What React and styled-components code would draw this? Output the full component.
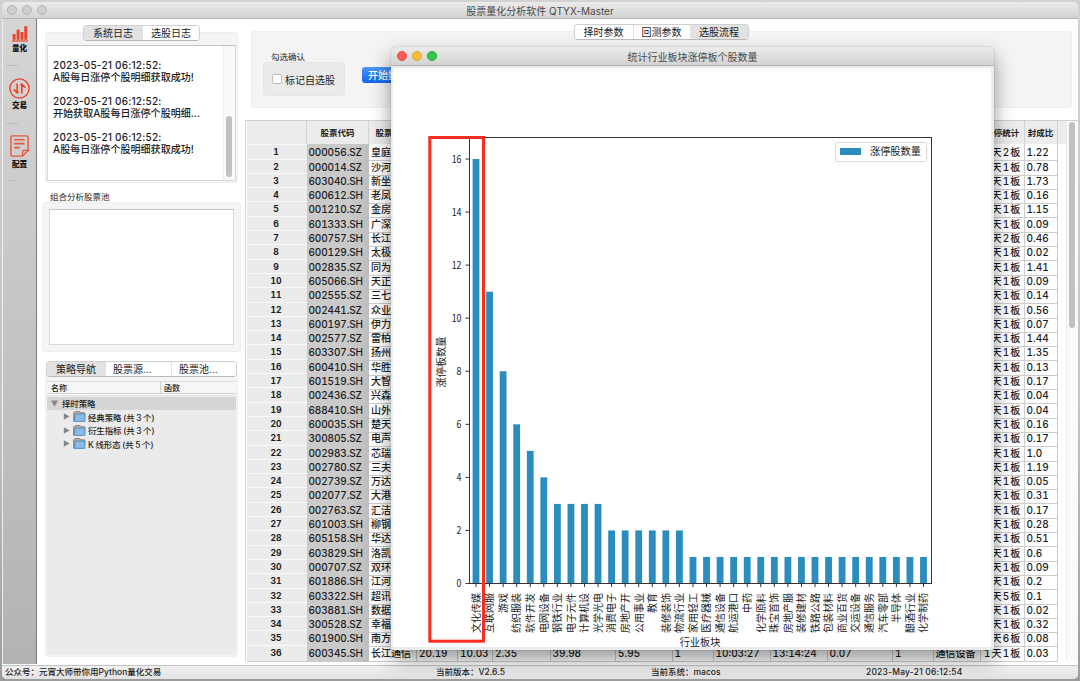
import React from "react";
import styled, { createGlobalStyle, css } from "styled-components";

const Global = createGlobalStyle`
  * { box-sizing: border-box; }
  html, body { margin: 0; padding: 0; overflow: hidden; }
  body {
    font-family: Inter, "Noto Sans CJK SC", sans-serif;
    font-size: 10px;
    color: #1c1c1c;
    white-space: nowrap;
  }
`;

/* ---------- data ---------- */

const STOCKS = [
  ["000056.SZ", "皇庭国际", "1 天 2 板", "1.22"],
  ["000014.SZ", "沙河股份", "1 天 1 板", "0.78"],
  ["603040.SH", "新坐标", "1 天 1 板", "1.73"],
  ["600612.SH", "老凤祥", "1 天 1 板", "0.16"],
  ["001210.SZ", "金房节能", "1 天 1 板", "1.15"],
  ["601333.SH", "广深铁路", "1 天 1 板", "0.09"],
  ["600757.SH", "长江传媒", "1 天 2 板", "0.46"],
  ["600129.SH", "太极集团", "1 天 1 板", "0.02"],
  ["002835.SZ", "同为股份", "1 天 1 板", "1.41"],
  ["605066.SH", "天正电气", "1 天 1 板", "0.09"],
  ["002555.SZ", "三七互娱", "1 天 1 板", "0.14"],
  ["002441.SZ", "众业达", "1 天 1 板", "0.56"],
  ["600197.SH", "伊力特", "1 天 1 板", "0.07"],
  ["002577.SZ", "雷柏科技", "1 天 1 板", "1.44"],
  ["603307.SH", "扬州金泉", "1 天 1 板", "1.35"],
  ["600410.SH", "华胜天成", "1 天 1 板", "0.13"],
  ["601519.SH", "大智慧", "1 天 1 板", "0.17"],
  ["002436.SZ", "兴森科技", "1 天 1 板", "0.04"],
  ["688410.SH", "山外山", "1 天 1 板", "0.04"],
  ["600035.SH", "楚天高速", "1 天 1 板", "0.16"],
  ["300805.SZ", "电声股份", "1 天 1 板", "0.17"],
  ["002983.SZ", "芯瑞达", "1 天 1 板", "1.0"],
  ["002780.SZ", "三夫户外", "1 天 1 板", "1.19"],
  ["002739.SZ", "万达电影", "1 天 1 板", "0.05"],
  ["002077.SZ", "大港股份", "1 天 1 板", "0.31"],
  ["002763.SZ", "汇洁股份", "1 天 1 板", "0.17"],
  ["601003.SH", "柳钢股份", "1 天 1 板", "0.28"],
  ["605158.SH", "华达新材", "1 天 1 板", "0.51"],
  ["603829.SH", "洛凯股份", "1 天 1 板", "0.6"],
  ["000707.SZ", "双环科技", "1 天 1 板", "0.09"],
  ["601886.SH", "江河集团", "1 天 1 板", "0.2"],
  ["603322.SH", "超讯通信", "1 天 5 板", "0.1"],
  ["603881.SH", "数据港", "1 天 1 板", "0.02"],
  ["300528.SZ", "幸福蓝海", "1 天 1 板", "0.32"],
  ["601900.SH", "南方传媒", "1 天 6 板", "0.08"],
  ["600345.SH", "长江通信", "1 天 1 板", "0.03",
    ["20.19", "10.03", "2.35", "39.98", "5.95", "1", "10:03:27", "13:14:24", "0.07", "1", "通信设备"]],
];

const SECTORS = [
  ["文化传媒", 16], ["互联网服", 11], ["游戏", 8], ["纺织服装", 6], ["软件开发", 5],
  ["电网设备", 4], ["钢铁行业", 3], ["电子元件", 3], ["计算机设", 3], ["光学光电", 3],
  ["消费电子", 2], ["房地产开", 2], ["公用事业", 2], ["教育", 2], ["装修装饰", 2],
  ["物流行业", 2], ["家用轻工", 1], ["医疗器械", 1], ["通信设备", 1], ["航运港口", 1],
  ["中药", 1], ["化学原料", 1], ["珠宝首饰", 1], ["房地产服", 1], ["装修建材", 1],
  ["铁路公路", 1], ["包装材料", 1], ["商业百货", 1], ["交运设备", 1], ["通信服务", 1],
  ["汽车零部", 1], ["半导体", 1], ["酿酒行业", 1], ["化学制药", 1],
];

/* ---------- window frame ---------- */

const Desktop = styled.div`
  width: 1080px;
  height: 681px;
  padding: 2px 2px 2px 2px;
  background: linear-gradient(#d2d2d2, #c4c4c4 60%, #9c9c9c);
`;

const MainWindow = styled.div`
  position: relative;
  height: 677px;
  display: flex;
  flex-direction: column;
  background: #fff;
  border-radius: 5px;
  overflow: hidden;
`;

const TitleBar = styled.div`
  position: relative;
  flex: none;
  height: ${(p) => p.$h}px;
  display: flex;
  align-items: center;
  justify-content: center;
  background: linear-gradient(#ebebeb, #d3d3d3);
  border-bottom: 1px solid #b4b4b4;
  color: #4a4a4a;
  font-size: 10px;
`;

const Lights = styled.div`
  position: absolute;
  left: ${(p) => p.$x}px;
  top: 50%;
  transform: translateY(-50%);
  display: flex;
  gap: ${(p) => p.$gap}px;
`;

const Light = styled.span`
  width: 10px;
  height: 10px;
  border-radius: 50%;
  background: ${(p) => p.$c};
  border: 1px solid ${(p) => p.$b};
`;

const Body = styled.div`
  flex: 1;
  min-height: 0;
  display: flex;
`;

const StatusBar = styled.div`
  flex: none;
  height: 14px;
  display: grid;
  grid-template-columns: 431px 215px 215px 1fr;
  align-items: center;
  padding: 0 0 1px 3px;
  background: linear-gradient(#f0f0f0, #e2e2e2);
  border-top: 1px solid #c3c3c3;
  font-size: 8.5px;
  font-weight: 500;
  line-height: 11px;
`;

const Stamp = styled.span`
  letter-spacing: 0.2px;
`;

/* ---------- sidebar ---------- */

const Sidebar = styled.nav`
  width: 35px;
  height: 645px;
  flex: none;
  display: flex;
  flex-direction: column;
  border-left: 1px solid #eee;
  border-right: 1px solid #7c7c7c;
  background: linear-gradient(#d5d5d5, #b3b3b3);
`;

const Tool = styled.div`
  height: 57.5px;
  display: flex;
  flex-direction: column;
  align-items: center;
  font-size: 7.6px;
  font-weight: 800;
  line-height: 10px;
  color: #111;
  padding-top: ${(p) => p.$top}px;
  gap: ${(p) => p.$gap}px;
  svg { display: block; flex: none; }
`;

const ToolRule = styled.div`
  width: 12px;
  height: 1px;
  margin: -11.5px 0 10.5px 3px;
  background: #bcbcbc;
`;

/* ---------- shared panels ---------- */

const Tabs = styled.div`
  position: relative;
  z-index: 1;
  flex: none;
  align-self: ${(p) => (p.$left ? "flex-start" : "center")};
  display: flex;
  height: 16px;
  margin: ${(p) => p.$m || 0};
  border: 1px solid #cfcfcf;
  border-bottom-color: #b9b9b9;
  border-radius: 4px;
  background: #fff;
  overflow: hidden;
`;

const Tab = styled.div`
  width: ${(p) => p.$w}px;
  padding-left: ${(p) => p.$pl || 0}px;
  padding-bottom: 1px;
  display: flex;
  align-items: center;
  justify-content: ${(p) => (p.$pl ? "flex-start" : "center")};
  background: ${(p) => (p.$on ? "#e2e2e2" : "#fff")};
  & + & { border-left: 1px solid #e2e2e2; }
`;

const Panel = styled.section`
  flex: none;
  display: flex;
  flex-direction: column;
  height: ${(p) => p.$h}px;
  margin: ${(p) => p.$m || 0};
  padding: ${(p) => p.$p || 0};
  background: #f4f4f4;
  border: 1px solid #eeeeee;
  border-radius: 3px;
`;

const Caption = styled.div`
  height: 10px;
  line-height: 10px;
  font-size: 8.5px;
  margin: ${(p) => p.$m};
`;

const LeftColumn = styled.aside`
  width: 204px;
  flex: none;
  display: flex;
  flex-direction: column;
`;

const Sunken = styled.div`
  flex: 1;
  display: flex;
  justify-content: space-between;
  background: #fff;
  border: 1px solid #d9d9d9;
  border-top: 1px solid #c4c4c4;
`;

const LogText = styled.div`
  padding: 13px 0 0 5px;
  line-height: 12px;
  white-space: pre;
  font-weight: 500;
  letter-spacing: 0.05px;
`;

const LogTime = styled.span`
  letter-spacing: 0.22px;
`;

const ScrollTrack = styled.div`
  width: 12px;
  flex: none;
  background: #fafafa;
  border-left: 1px solid #ececec;
  padding: ${(p) => p.$top}px 0 0 2px;
`;

const Thumb = styled.div`
  width: 6px;
  height: ${(p) => p.$h}px;
  border-radius: 3px;
  background: #c1c1c1;
`;

/* ---------- tree ---------- */

const TreeHead = styled.div`
  height: 13px;
  flex: none;
  display: flex;
  align-items: center;
  margin-bottom: 1px;
  background: #f6f6f6;
  border-top: 1px solid #dcdcdc;
  border-bottom: 1px solid #d4d4d4;
  font-size: 8px;
  font-weight: 500;
  span { width: 113px; padding-left: 4px; }
  span + span { width: 75px; padding-left: 3px; border-left: 1px solid #cfcfcf; }
`;

const Tree = styled.div`
  flex: 1;
  padding-top: 1.5px;
  background: #ebebeb;
`;

const TreeRow = styled.div`
  height: 13.5px;
  display: flex;
  align-items: center;
  gap: ${(p) => (p.$root ? 5 : 3)}px;
  padding-left: ${(p) => (p.$root ? 4 : 16)}px;
  background: ${(p) => (p.$root ? "#d6d6d6" : "transparent")};
  font-size: 8.4px;
  font-weight: 500;
  word-spacing: -0.6px;
  span { margin-left: -1px; }
`;

/* ---------- right side ---------- */

const RightColumn = styled.main`
  flex: 1;
  min-width: 0;
  display: flex;
  flex-direction: column;
`;

const Options = styled.div`
  display: flex;
  align-items: flex-start;
  gap: 17px;
`;

const Group = styled.div`
  width: 82px;
  height: 34px;
  display: flex;
  align-items: center;
  gap: 3px;
  padding-left: 8px;
  background: #eaeaea;
  border: 1px solid #e5e5e5;
  border-radius: 3px;
`;

const Check = styled.span`
  width: 10px;
  height: 10px;
  background: #fff;
  border: 1px solid #bdbdbd;
  border-radius: 2px;
`;

const BlueButton = styled.button`
  width: 70px;
  height: 16px;
  margin-top: 5px;
  padding: 0 0 1px 6px;
  border: 0;
  border-radius: 3px;
  background: linear-gradient(#4b97fb, #1465ea);
  color: #fff;
  font: inherit;
  font-weight: 500;
  text-align: left;
`;

const TableFrame = styled.div`
  display: flex;
  justify-content: space-between;
  height: 541px;
  margin: 12px 0 0 4px;
  border-left: 1px solid #d5d5d5;
  border-top: 1px solid #cdcdcd;
`;

const cols = css`
  display: grid;
  grid-template-columns: 60px 62px 48px 41px 35px 57.5px 65.5px 56.5px 41px 57px 57px 65.5px 40.5px 47.5px 43.5px 33px;
`;

const TableBody = styled.div`
  width: 820px;
  padding-left: 1px;
`;

const HeadRow = styled.div`
  ${cols}
  width: 819px;
  height: 23.3px;
  background: #ececec;
  font-size: 8.5px;
  font-weight: 700;
`;

const HeadCell = styled.div`
  display: flex;
  align-items: center;
  justify-content: center;
  padding-bottom: 2px;
  border-right: 1px solid #d2d2d2;
  overflow: hidden;
`;

const Row = styled.div`
  ${cols}
  width: 811px;
  height: 14.31px;
  line-height: 17px;
  font-weight: 500;
  font-variant-numeric: tabular-nums;
`;

const Index = styled.div`
  padding-right: 2px;
  text-align: center;
  font-size: 8.6px;
  font-weight: 700;
  background: #ebebeb;
  border-top: 1px solid #fafafa;
  border-bottom: 1px solid #cfcfcf;
  line-height: 15px;
`;

const Code = styled.div`
  padding-left: 1.5px;
  letter-spacing: -0.12px;
  background: linear-gradient(90deg, #cacaca 70%, #bdbdbd);
`;

const Cell = styled.div`
  padding-left: ${(p) => (p.$stat ? 3 : 2)}px;
  word-spacing: -1.2px;
  letter-spacing: ${(p) => (p.$stat ? -0.2 : 0)}px;
  border-right: 1px solid #cdcdcd;
  border-bottom: 1px solid #cdcdcd;
  overflow: hidden;
`;

/* ---------- chart window ---------- */

const ChartWindow = styled.div`
  position: absolute;
  left: 389px;
  top: 45px;
  width: 603px;
  height: 602.5px;
  display: flex;
  flex-direction: column;
  background: #ebebeb;
  border-radius: 5px 5px 2px 2px;
  box-shadow: 0 0 1px rgba(0, 0, 0, 0.5), 0 9px 20px rgba(0, 0, 0, 0.42);
  overflow: hidden;
`;

const Canvas = styled.div`
  flex: 1;
  margin: 2px 3px 3px 2px;
  background: #fff;
  svg { display: block; overflow: visible; }
`;

const ChartText = styled.text`
  font-family: "Noto Sans CJK SC", sans-serif;
  font-size: ${(p) => p.$s || 10}px;
  fill: #222;
`;

const PLOT = { left: 469.5, right: 931.5, top: 137.5, bottom: 583.5, unit: 26.53, first: 476, pitch: 13.56 };

function Chart() {
  return (
    <svg width="598" height="578" viewBox="393 68 598 578">
      {SECTORS.map(([name, n], i) => {
        const cx = PLOT.first + i * PLOT.pitch;
        return (
          <g key={i}>
            <rect x={cx - 3.4} y={PLOT.bottom - n * PLOT.unit} width="6.8" height={n * PLOT.unit} fill="#2b8cbe" />
            <line x1={cx} x2={cx} y1={PLOT.bottom} y2={PLOT.bottom + 3.5} stroke="#333" />
            <ChartText transform={`translate(${cx + 3.8} 593) rotate(-90)`} textAnchor="end">{name}</ChartText>
          </g>
        );
      })}
      {[0, 2, 4, 6, 8, 10, 12, 14, 16].map((v) => {
        const y = PLOT.bottom - v * PLOT.unit;
        return (
          <g key={v}>
            <line x1={PLOT.left - 4} x2={PLOT.left} y1={y} y2={y} stroke="#333" />
            <ChartText x="461.5" y={y + 3.5} textAnchor="end" textLength={v > 9 ? 9.8 : 4.9} lengthAdjust="spacingAndGlyphs">{v}</ChartText>
          </g>
        );
      })}
      <rect x={PLOT.left} y={PLOT.top} width={PLOT.right - PLOT.left} height={PLOT.bottom - PLOT.top} fill="none" stroke="#333" />
      <rect x="835.5" y="142.5" width="91" height="19" rx="2" fill="#fff" stroke="#d9d9d9" />
      <rect x="840" y="148" width="21" height="7" fill="#2b8cbe" />
      <ChartText x="870" y="155" $s={10.2}>涨停股数量</ChartText>
      <ChartText x="700" y="645.8" textAnchor="middle" $s={10.2}>行业板块</ChartText>
      <ChartText transform="translate(445 362) rotate(-90)" textAnchor="middle" $s={10.2}>涨停板数量</ChartText>
      <rect x="429.8" y="137.5" width="53.7" height="503.7" fill="none" stroke="#fb2c20" strokeWidth="3" />
    </svg>
  );
}

const QuantIcon = () => (
  <svg width="16" height="16" viewBox="0 0 16 16" fill="#e8452c">
    <rect x="0.6" y="8" width="3" height="5.8" />
    <rect x="4.6" y="3.6" width="3" height="10.2" />
    <rect x="8.5" y="6" width="3" height="7.8" />
    <rect x="12.3" y="0.2" width="3" height="13.6" />
    <rect x="0" y="14.4" width="16" height="1.2" />
  </svg>
);

const TradeIcon = () => (
  <svg width="21" height="21" viewBox="0 0 21 21" fill="none" stroke="#e8452c" strokeWidth="1.4">
    <circle cx="10.5" cy="10.5" r="9.6" />
    <path d="M8.2 5.4V14.9M4.8 11.4L8.2 14.9L9.6 13.6M12.8 15.6V6.1M16.2 9.6L12.8 6.1L11.4 7.4" strokeWidth="1.7" />
  </svg>
);

const ConfigIcon = () => (
  <svg width="19" height="22" viewBox="0 0 19 22" fill="none" stroke="#e8583f" strokeWidth="1.4" strokeLinejoin="round">
    <path d="M2.6 0.9H16.4Q18.1 0.9 18.1 2.6V15.4L12.6 21.1H2.6Q0.9 21.1 0.9 19.4V2.6Q0.9 0.9 2.6 0.9Z" />
    <path d="M12.6 21V16.8Q12.6 15.4 14 15.4H18" />
    <path d="M4.2 4.8H14.6M4.2 8.6H14.6M4.2 12.6H9.6" strokeWidth="1.6" />
  </svg>
);

const Arrow = ({ open }) => (
  <svg width="7" height="7" viewBox="0 0 7 7" fill="#858585">
    <path d={open ? "M0 0.5H7L3.5 6.5Z" : "M0.8 0.2L6.6 3.5L0.8 6.8Z"} />
  </svg>
);

const Folder = () => (
  <svg width="13" height="11" viewBox="0 0 13 11">
    <path d="M0.6 10.5V2L2 0.6H7L8 1.8H11.6V4" fill="#b9b4a8" stroke="#77746c" strokeWidth="0.8" />
    <path d="M2 3H12.2L11.8 10.4H1.4Z" fill="#86bbea" stroke="#4a7fb4" strokeWidth="0.8" />
  </svg>
);

const LOG = [
  "A股每日涨停个股明细获取成功!",
  "开始获取A股每日涨停个股明细...",
  "A股每日涨停个股明细获取成功!",
];

const HEADS = ["", "股票代码", "股票名称", "涨跌幅", "价格", "成交额", "流通市值", "换手率", "连板", "首次封板", "最后封板", "封单", "炸板", "所属行业", "涨停统计", "封成比"];

const TREE = ["经典策略 (共 3 个)", "衍生指标 (共 3 个)", "K 线形态 (共 5 个)"];

export default function App() {
  return (
    <Desktop>
      <Global />
      <MainWindow>
        <TitleBar $h={17}>
          <Lights $x={5} $gap={5}>
            {[0, 1, 2].map((i) => <Light key={i} $c="#cfcfcf" $b="#b3b3b3" />)}
          </Lights>
          股票量化分析软件 QTYX-Master
        </TitleBar>
        <Body>
          <Sidebar>
            <Tool $top={7} $gap={2}><QuantIcon />量化</Tool>
            <ToolRule />
            <Tool $top={1} $gap={2}><TradeIcon />交易</Tool>
            <ToolRule />
            <Tool $top={1} $gap={3}><ConfigIcon />配置</Tool>
            <ToolRule />
          </Sidebar>
          <LeftColumn>
            <Tabs $left $m="6px 0 0 46px">
              <Tab $w={58} $on>系统日志</Tab>
              <Tab $w={57}>选股日志</Tab>
            </Tabs>
            <Panel $h={151} $m="-9px 3px 0 8px" $p="12px 1px 1px">
              <Sunken>
                <LogText>
                  {LOG.map((line, i) => (
                    <React.Fragment key={i}>
                      <LogTime>2023-05-21 06:12:52:</LogTime>{"\n"}{line}{"\n\n"}
                    </React.Fragment>
                  ))}
                </LogText>
                <ScrollTrack $top={70}><Thumb $h={61} /></ScrollTrack>
              </Sunken>
            </Panel>
            <Caption $m="9px 0 0 13px">组合分析股票池</Caption>
            <Panel $h={150} $m="0 0 0 5px" $p="6px">
              <Sunken />
            </Panel>
            <Tabs $left $m="9px 0 0 9px">
              <Tab $w={58} $on>策略导航</Tab>
              <Tab $w={66} $pl={7}>股票源…</Tab>
              <Tab $w={65} $pl={7}>股票池…</Tab>
            </Tabs>
            <Panel $h={287} $m="-7px 3px 0 8px" $p="10px 1px 1px">
              <TreeHead><span>名称</span><span>函数</span></TreeHead>
              <Tree>
                <TreeRow $root><Arrow open /><span>择时策略</span></TreeRow>
                {TREE.map((t) => <TreeRow key={t}><Arrow /><Folder /><span>{t}</span></TreeRow>)}
              </Tree>
            </Panel>
          </LeftColumn>
          <RightColumn>
            <Tabs $m="5px 0 0 3px">
              <Tab $w={58}>择时参数</Tab>
              <Tab $w={57}>回测参数</Tab>
              <Tab $w={58} $on>选股流程</Tab>
            </Tabs>
            <Panel $h={77} $m="-9px 6px 0 10px" $p="20px 0 0 11px">
              <Caption $m="0 0 0 8px">勾选确认</Caption>
              <Options>
                <Group><Check />标记自选股</Group>
                <BlueButton>开始数据</BlueButton>
              </Options>
            </Panel>
            <TableFrame>
              <TableBody>
                <HeadRow>{HEADS.map((h, i) => <HeadCell key={i}>{h}</HeadCell>)}</HeadRow>
                {STOCKS.map(([code, name, stat, ratio, mid], i) => (
                  <Row key={code}>
                    <Index>{i + 1}</Index>
                    <Code>{code}</Code>
                    <Cell>{name}</Cell>
                    {Array.from({ length: 11 }, (_, k) => <Cell key={k}>{mid ? mid[k] : ""}</Cell>)}
                    <Cell $stat>{stat}</Cell>
                    <Cell>{ratio}</Cell>
                  </Row>
                ))}
              </TableBody>
              <ScrollTrack $top={1}><Thumb $h={206} /></ScrollTrack>
            </TableFrame>
          </RightColumn>
        </Body>
        <StatusBar>
          <span>公众号：元宵大师带你用Python量化交易</span>
          <span>当前版本：V2.6.5</span>
          <span>当前系统：macos</span>
          <Stamp>2023-May-21 06:12:54</Stamp>
        </StatusBar>
        <ChartWindow>
          <TitleBar $h={19}>
            <Lights $x={6} $gap={5}>
              <Light $c="#fc5b57" $b="#e2463f" />
              <Light $c="#fdbc40" $b="#dfa023" />
              <Light $c="#34c84a" $b="#1faa33" />
            </Lights>
            统计行业板块涨停板个股数量
          </TitleBar>
          <Canvas><Chart /></Canvas>
        </ChartWindow>
      </MainWindow>
    </Desktop>
  );
}
